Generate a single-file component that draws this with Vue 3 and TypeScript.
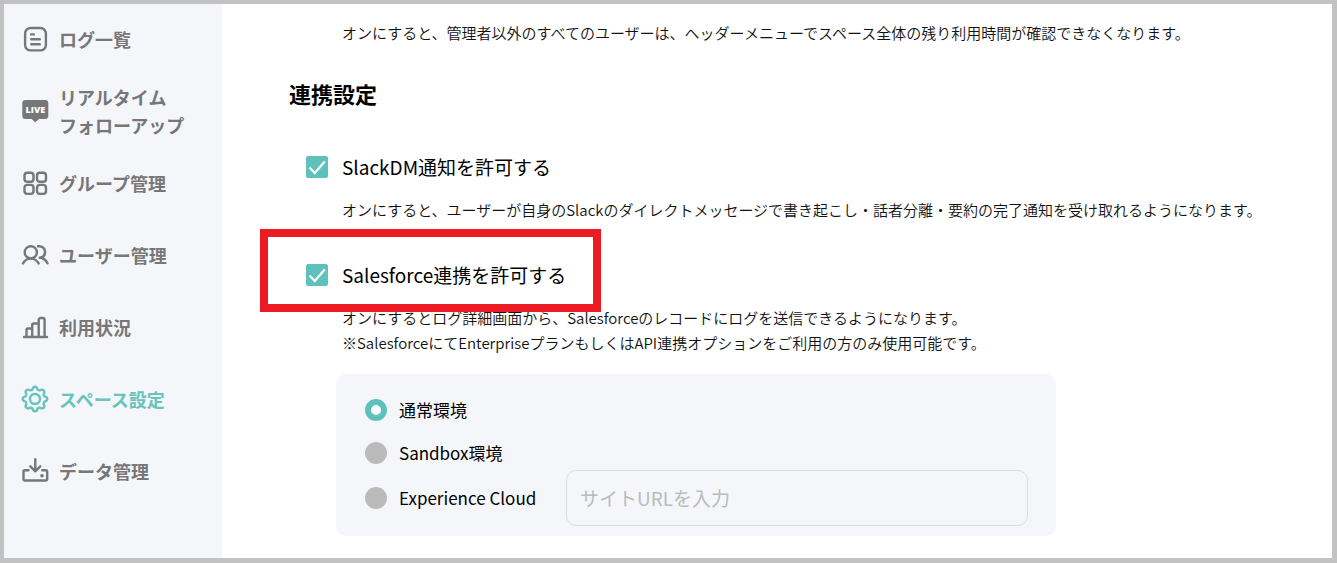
<script setup lang="ts">
import { reactive, ref } from 'vue'

interface NavItem {
  icon: 'log' | 'live' | 'group' | 'users' | 'chart' | 'gear' | 'data'
  lines: string[]
  active?: boolean
}

const navItems: NavItem[] = [
  { icon: 'log', lines: ['ログ一覧'] },
  { icon: 'live', lines: ['リアルタイム', 'フォローアップ'] },
  { icon: 'group', lines: ['グループ管理'] },
  { icon: 'users', lines: ['ユーザー管理'] },
  { icon: 'chart', lines: ['利用状況'] },
  { icon: 'gear', lines: ['スペース設定'], active: true },
  { icon: 'data', lines: ['データ管理'] },
]

const settings = reactive({ slack: true, salesforce: true })
const environment = ref('normal')
const siteUrl = ref('')
</script>

<template>
  <div class="page">
    <nav class="sidebar" aria-label="メインメニュー">
      <a
        v-for="item in navItems"
        :key="item.icon"
        href="#"
        class="nav-item"
        :class="{ active: item.active }"
        :aria-current="item.active ? 'page' : undefined"
      >
        <svg class="nav-icon" viewBox="0 0 28 28" aria-hidden="true">
          <g v-if="item.icon === 'log'">
            <rect x="4.1" y="3" width="20.8" height="22.4" rx="5.5" />
            <path d="M10.2 9.400h2.600M10.200 14.300h8.600M10.200 19.300h8.600" />
          </g>
          <g v-else-if="item.icon === 'live'">
            <path
              class="solid"
              d="M4.300 3h20a3 3 0 0 1 3 3v13a3 3 0 0 1-3 3h-6.200l-3.800 3.300L10.500 22H4.300a3 3 0 0 1-3-3V6a3 3 0 0 1 3-3z"
            />
            <text class="live-text" x="14.300" y="15.800" text-anchor="middle">LIVE</text>
          </g>
          <g v-else-if="item.icon === 'group'">
            <rect x="3.500" y="3.700" width="9" height="9" rx="2.800" />
            <rect x="16" y="3.700" width="9" height="9" rx="2.800" />
            <rect x="3.500" y="15.900" width="9" height="9" rx="2.800" />
            <rect x="16" y="15.900" width="9" height="9" rx="2.800" />
          </g>
          <g v-else-if="item.icon === 'users'">
            <circle cx="9.800" cy="11.300" r="6.100" />
            <path d="M1.900 22.500c1.500-3 4.500-4.900 7.900-4.900s6.400 1.900 7.900 4.900" />
            <path d="M17 5.300c3.900-.7 7.100 2 7.100 5.700 0 3.200-2.300 5.400-5.400 5.800M20.800 17.200c2.600.8 4.500 2.500 5.700 5.100" />
          </g>
          <g v-else-if="item.icon === 'chart'">
            <path d="M3 24h23M5.500 24V17a1.500 1.500 0 0 1 1.500-1.500h4.200M11.200 24V12a1.500 1.500 0 0 1 1.500-1.500h5M17.700 24V7a2 2 0 0 1 2-2h1.900a2 2 0 0 1 2 2V24" />
          </g>
          <g v-else-if="item.icon === 'gear'">
            <path
              d="M11.400 4.600Q12 1.700 14 1.700T16.600 4.600Q17.300 5.500 18.800 5.400Q21.300 3.900 22.700 5.300T22.600 9.200Q22.500 10.700 23.400 11.400Q26.300 12 26.300 14T23.400 16.600Q22.500 17.300 22.600 18.800Q24.100 21.300 22.700 22.700T18.800 22.600Q17.300 22.500 16.600 23.400Q16 26.300 14 26.300T11.400 23.400Q10.700 22.500 9.200 22.600Q6.700 24.100 5.300 22.700T5.400 18.800Q5.500 17.300 4.600 16.600Q1.700 16 1.700 14T4.600 11.400Q5.500 10.700 5.400 9.200Q3.900 6.700 5.300 5.300T9.200 5.400Q10.700 5.500 11.400 4.600Z"
            />
            <circle cx="14" cy="14" r="5" />
          </g>
          <g v-else>
            <path d="M7.500 13.300H4a1.500 1.500 0 0 0-1.500 1.500V22a1.500 1.500 0 0 0 1.500 1.500h20.700a1.500 1.500 0 0 0 1.500-1.500v-7.200a1.500 1.500 0 0 0-1.500-1.500h-3.500M14.300 2.300v12M9.300 9.300l5 5 5-5" />
            <circle class="solid" cx="21" cy="18.700" r="1.800" />
          </g>
        </svg>
        <span class="nav-label">
          <span v-for="line in item.lines" :key="line" class="nav-line">{{ line }}</span>
        </span>
      </a>
    </nav>

    <main class="content">
      <p class="description">オンにすると、管理者以外のすべてのユーザーは、ヘッダーメニューでスペース全体の残り利用時間が確認できなくなります。</p>

      <h2 class="heading">連携設定</h2>

      <section class="setting">
        <label class="option">
          <span class="tick">
            <input v-model="settings.slack" type="checkbox" aria-describedby="slack-note" />
            <svg v-if="settings.slack" viewBox="0 0 22 22" aria-hidden="true"><path d="M3.500 11.500l5.300 5.500L18.700 5.500" /></svg>
          </span>
          <span>SlackDM通知を許可する</span>
        </label>
        <p id="slack-note" class="description">オンにすると、ユーザーが自身のSlackのダイレクトメッセージで書き起こし・話者分離・要約の完了通知を受け取れるようになります。</p>
      </section>

      <section class="setting">
        <label class="option highlighted">
          <span class="tick">
            <input v-model="settings.salesforce" type="checkbox" aria-describedby="salesforce-note" />
            <svg v-if="settings.salesforce" viewBox="0 0 22 22" aria-hidden="true"><path d="M3.500 11.500l5.300 5.500L18.700 5.500" /></svg>
          </span>
          <span>Salesforce連携を許可する</span>
        </label>
        <p id="salesforce-note" class="description">
          オンにするとログ詳細画面から、Salesforceのレコードにログを送信できるようになります。<br />※SalesforceにてEnterpriseプランもしくはAPI連携オプションをご利用の方のみ使用可能です。
        </p>

        <div class="panel" role="radiogroup" aria-label="Salesforce環境">
          <label class="choice">
            <input v-model="environment" type="radio" name="environment" value="normal" />
            <span>通常環境</span>
          </label>
          <label class="choice">
            <input v-model="environment" type="radio" name="environment" value="sandbox" />
            <span>Sandbox環境</span>
          </label>
          <div class="cloud-row">
            <label class="choice">
              <input v-model="environment" type="radio" name="environment" value="cloud" />
              <span>Experience Cloud</span>
            </label>
            <input v-model="siteUrl" class="url" type="text" placeholder="サイトURLを入力" aria-label="サイトURL" />
          </div>
        </div>
      </section>
    </main>
  </div>
</template>

<style>
body {
  margin: 0;
}
</style>

<style scoped>
.page {
  box-sizing: border-box;
  display: flex;
  min-height: 100vh;
  border: solid #c2c2c2;
  border-width: 4px 5px 5px 4px;
  background: #fff;
  color: #111;
  font-family: "Noto Sans CJK JP", "Noto Sans", sans-serif;
}

.sidebar {
  flex: 0 0 218px;
  background: #f4f6fa;
}

.nav-item {
  box-sizing: border-box;
  display: flex;
  align-items: center;
  gap: 10px;
  height: 72px;
  padding: 0 0 2px 17px;
  color: #777;
  font-size: 18px;
  font-weight: 700;
  line-height: 28px;
  text-decoration: none;
}

.nav-item.active {
  color: #66c3bd;
}

.nav-icon {
  flex: none;
  width: 28px;
  height: 28px;
  fill: none;
  stroke: currentColor;
  stroke-width: 2.4;
  stroke-linecap: round;
  stroke-linejoin: round;
}

.nav-icon .solid {
  fill: currentColor;
  stroke: none;
}

.live-text {
  fill: #fff;
  stroke: none;
  font-family: "Open Sans", sans-serif;
  font-size: 9px;
  font-weight: 800;
}

.nav-line {
  display: block;
}

.content {
  flex: 1;
  min-width: 0;
  padding: 16px 0 22px 67px;
}

.description {
  margin: 0 0 0 53px;
  font-size: 15px;
  font-weight: 350;
  line-height: 25px;
}

.heading {
  margin: 32px 0 44px;
  color: #000;
  font-size: 22px;
  font-weight: 700;
  line-height: 32px;
}

.setting + .setting {
  margin-top: 39px;
}

.option {
  position: relative;
  display: flex;
  align-items: center;
  gap: 14px;
  width: fit-content;
  margin: 0 0 16px 17px;
  color: #000;
  font-size: 19px;
  line-height: 28px;
}

.highlighted::after {
  content: "";
  position: absolute;
  inset: -32px -35px -23px -46px;
  border: 8px solid #ed1c24;
  pointer-events: none;
}

.tick {
  display: grid;
  width: 22px;
  height: 22px;
}

.tick > * {
  grid-area: 1 / 1;
}

.tick input {
  appearance: none;
  width: 22px;
  height: 22px;
  margin: 0;
  border: 1px solid #bbb;
  border-radius: 2px;
}

.tick input:checked {
  border-color: #5fc1bb;
  background: #5fc1bb;
}

.tick svg {
  fill: none;
  stroke: #fff;
  stroke-width: 2.2;
  pointer-events: none;
}

.panel {
  box-sizing: border-box;
  max-width: 720px;
  margin: 19px 28px 0 47px;
  padding: 19px 28px 10px 29px;
  border-radius: 10px;
  background: #f4f6fa;
}

.choice {
  display: flex;
  align-items: center;
  gap: 12px;
  width: fit-content;
  color: #000;
  font-size: 17px;
  line-height: 34px;
  white-space: nowrap;
}

.choice + .choice {
  margin-top: 9px;
}

.choice input {
  appearance: none;
  box-sizing: border-box;
  width: 22px;
  height: 22px;
  margin: 0;
  border-radius: 50%;
  background: #bbb;
}

.choice input:checked {
  border: 6px solid #5fc1bb;
  background: #fff;
}

.cloud-row {
  display: grid;
  grid-template-columns: 201px 1fr;
  align-items: center;
}

.url {
  box-sizing: border-box;
  width: 100%;
  min-width: 0;
  height: 56px;
  padding: 0 13px 2px;
  border: 1px solid #dcdee2;
  border-radius: 10px;
  background: transparent;
  color: #111;
  font: inherit;
  font-size: 19px;
}

.url::placeholder {
  color: #bbb;
  opacity: 1;
}
</style>
